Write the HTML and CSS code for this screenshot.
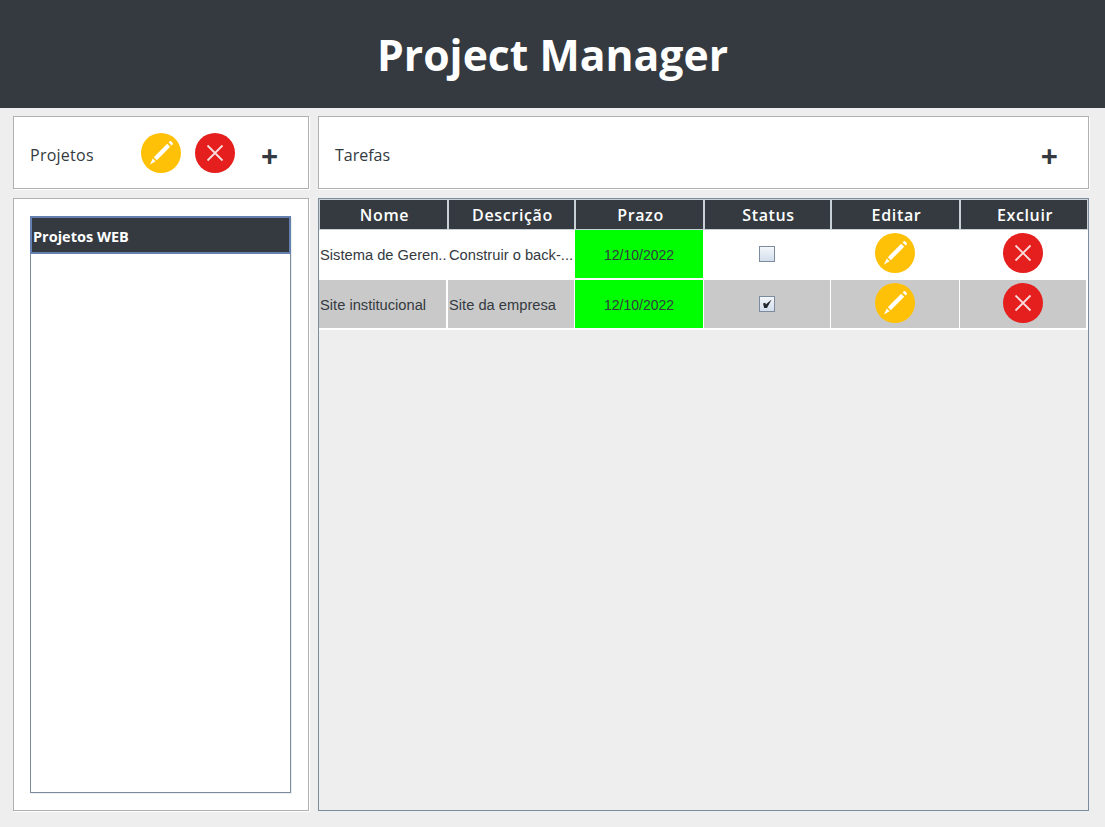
FILE: index.html
```html
<!DOCTYPE html>
<html lang="en">
<head>
    <meta charset="UTF-8">
    <title>Project Manager</title>
    <link rel="stylesheet" href="styles.css">
</head>
<body>
    <svg class="icon-defs" width="0" height="0" aria-hidden="true">
        <symbol id="icon-edit" viewBox="0 0 40 40">
            <circle cx="20" cy="20" r="20" fill="#ffc107"/>
            <path d="M12.8 24.2 26.2 10.8 29.2 13.8 15.8 27.2Z" fill="#fff"/>
            <path d="M27.6 9.4 28.6 8.4C29.2 7.9 29.8 7.9 30.3 8.4L31.6 9.7C32.1 10.2 32.1 10.8 31.6 11.4L30.6 12.4Z" fill="#fff"/>
            <path d="M11.8 25.4 14.6 28.2 9 31.4Z" fill="#fff"/>
        </symbol>
        <symbol id="icon-delete" viewBox="0 0 40 40">
            <circle cx="20" cy="20" r="20" fill="#e51e1e"/>
            <path d="M12.5 12.5 27.5 27.5M27.5 12.5 12.5 27.5" stroke="#fbdcdc" stroke-width="1.8" fill="none"/>
        </symbol>
    </svg>

    <header class="app-header">
        <h1>Project Manager</h1>
    </header>

    <main class="layout">
        <section class="panel toolbar toolbar-projects">
            <span class="toolbar-title">Projetos</span>
            <svg class="icon"><use href="#icon-edit"/></svg>
            <svg class="icon icon-second"><use href="#icon-delete"/></svg>
            <span class="add-btn add-projects">+</span>
        </section>

        <section class="panel toolbar toolbar-tasks">
            <span class="toolbar-title">Tarefas</span>
            <span class="add-btn add-tasks">+</span>
        </section>

        <section class="panel list-panel">
            <div class="project-list">
                <div class="project-item">Projetos WEB</div>
            </div>
        </section>

        <section class="table-panel">
            <table class="task-table">
                <colgroup>
                    <col class="col-wide"><col class="col-narrow"><col class="col-wide"><col class="col-narrow"><col class="col-wide"><col class="col-last">
                </colgroup>
                <thead>
                    <tr>
                        <th>Nome</th>
                        <th>Descrição</th>
                        <th>Prazo</th>
                        <th>Status</th>
                        <th>Editar</th>
                        <th>Excluir</th>
                    </tr>
                </thead>
                <tbody>
                    <tr>
                        <td>Sistema de Geren..</td>
                        <td>Construir o back-...</td>
                        <td class="deadline">12/10/2022</td>
                        <td class="center"><span class="check"></span></td>
                        <td class="center"><svg class="icon"><use href="#icon-edit"/></svg></td>
                        <td class="center"><svg class="icon"><use href="#icon-delete"/></svg></td>
                    </tr>
                    <tr class="row-alt">
                        <td>Site institucional</td>
                        <td>Site da empresa</td>
                        <td class="deadline">12/10/2022</td>
                        <td class="center">
                            <span class="check">
                                <svg viewBox="0 0 14 14" width="14" height="14"><path d="M3 6.4 5.4 5.8 5.8 7.4 11.6 2.6 7 11 4.2 11Z" fill="#23272e"/></svg>
                            </span>
                        </td>
                        <td class="center"><svg class="icon"><use href="#icon-edit"/></svg></td>
                        <td class="center"><svg class="icon"><use href="#icon-delete"/></svg></td>
                    </tr>
                </tbody>
            </table>
        </section>
    </main>
</body>
</html>
```

FILE: styles.css
```css
* {
    box-sizing: border-box;
}
html, body {
    height: 100%;
}
body {
    margin: 0;
    background-color: #eeeeee;
    color: #343a40;
    font-family: "Open Sans", "Noto Sans", sans-serif;
    overflow: hidden;
}
.icon-defs {
    position: absolute;
}
.app-header {
    height: 108px;
    background-color: #343a40;
    display: flex;
    align-items: center;
    justify-content: center;
}
.app-header h1 {
    margin: 0;
    color: #fff;
    font-size: 42.7px;
    font-weight: 700;
    line-height: 1;
    padding-top: 2px;
}
.layout {
    display: grid;
    grid-template-columns: 296px 771px;
    grid-template-rows: 73px 613px;
    column-gap: 9px;
    row-gap: 9px;
    padding: 8px 0 0 13px;
}
.panel {
    background: #fff;
    border: 1px solid #b0b0b0;
    box-shadow: 1px 1px 0 #fff;
}
.toolbar {
    display: flex;
    align-items: center;
    padding-left: 16px;
}
.toolbar-title {
    font-size: 16px;
    line-height: 1;
    margin-top: 4px;
}
.toolbar-projects .toolbar-title {
    width: 111px;
    letter-spacing: 0.25px;
}
.icon {
    display: block;
    width: 40px;
    height: 40px;
}
.icon-second {
    margin-left: 14px;
}
.add-btn {
    font-size: 30px;
    font-weight: 700;
    line-height: 1;
    margin-top: 6px;
}
.add-projects {
    margin-left: 26px;
}
.add-tasks {
    margin-left: auto;
    margin-right: 30px;
}
.list-panel {
    padding: 17px 17px 17px 16px;
}
.project-list {
    height: 577px;
    border: 1px solid #7c8c9c;
    background: #fff;
    box-shadow: 1px 1px 0 #eeeeee;
}
.project-item {
    height: 38px;
    background: #343a40;
    border: 2px solid #6480b0;
    color: #fff;
    font-size: 14.5px;
    font-weight: 700;
    line-height: 37px;
    padding-left: 1px;
    margin: -1px -1px 0;
}
.table-panel {
    border: 1px solid #7c8c9c;
    background: #eeeeee;
}
.task-table {
    width: 769px;
    table-layout: fixed;
    border-collapse: separate;
    border-spacing: 0;
}
.col-wide {
    width: 129px;
}
.col-narrow {
    width: 127px;
}
.col-last {
    width: 128px;
}
.task-table th {
    height: 31px;
    padding: 0 0 0 2px;
    background: #343a40;
    border: 1px solid #c8d0d8;
    color: #fff;
    font-size: 16px;
    font-weight: 600;
    letter-spacing: 0.65px;
}
.task-table td {
    height: 50px;
    padding: 2px 0 0 1px;
    background: #fff;
    border-right: 1px solid #fff;
    border-bottom: 2px solid #fff;
    font-family: "Liberation Sans", Arial, sans-serif;
    font-size: 14.7px;
    white-space: nowrap;
    overflow: hidden;
}
.task-table td:first-child,
.task-table td:last-child {
    border-right-width: 2px;
}
.task-table .row-alt td {
    background: #c9c9c9;
}
.task-table td.center {
    padding: 0;
    text-align: center;
}
.task-table td.center .icon {
    margin: -2px auto 0;
}
.task-table td.deadline,
.task-table .row-alt td.deadline {
    background: #00ff00;
    font-size: 14px;
    text-align: center;
    padding-left: 0;
}
.check {
    display: inline-flex;
    align-items: center;
    justify-content: center;
    width: 16px;
    height: 16px;
    margin-top: -2px;
    vertical-align: middle;
    border: 1px solid #7c8c9c;
    background: linear-gradient(#f4f7fb, #d3deec);
}
```
